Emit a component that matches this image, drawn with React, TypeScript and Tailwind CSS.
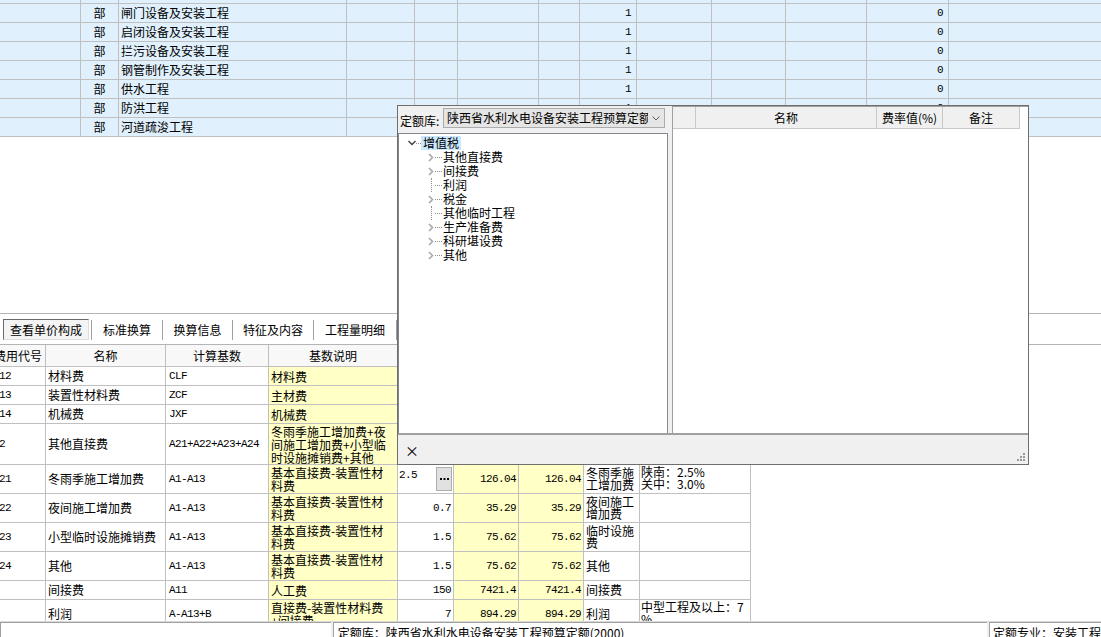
import React from "react";

const mono = "font-['Liberation_Mono',monospace] text-[11px] tracking-[-0.6px]";
const line = "border-[#c0c0c0]";

const topCols = [81, 38, 228, 68, 43, 81, 41, 57, 75, 74, 81, 82];
const topRows = ["闸门设备及安装工程", "启闭设备及安装工程", "拦污设备及安装工程", "钢管制作及安装工程", "供水工程", "防洪工程", "河道疏浚工程"];

type Row = {
  id: string;
  code: string;
  name: string;
  base: string;
  desc: string;
  rate?: string;
  price?: string;
  total?: string;
  type?: string;
  remark?: string;
  h: string;
  edit?: boolean;
};

const rows: Row[] = [
  { id: "a12", code: "A12", name: "材料费", base: "CLF", desc: "材料费", h: "h-[19px]" },
  { id: "a13", code: "A13", name: "装置性材料费", base: "ZCF", desc: "主材费", h: "h-[19px]" },
  { id: "a14", code: "A14", name: "机械费", base: "JXF", desc: "机械费", h: "h-[19px]" },
  { id: "a2", code: "A2", name: "其他直接费", base: "A21+A22+A23+A24", desc: "冬雨季施工增加费+夜间施工增加费+小型临时设施摊销费+其他", h: "h-[41px]" },
  { id: "a21", code: "A21", name: "冬雨季施工增加费", base: "A1-A13", desc: "基本直接费-装置性材料费", rate: "2.5", price: "126.04", total: "126.04", type: "冬雨季施工增加费", remark: "陕南：2.5%\n关中：3.0%", h: "h-[29px]", edit: true },
  { id: "a22", code: "A22", name: "夜间施工增加费", base: "A1-A13", desc: "基本直接费-装置性材料费", rate: "0.7", price: "35.29", total: "35.29", type: "夜间施工增加费", h: "h-[29px]" },
  { id: "a23", code: "A23", name: "小型临时设施摊销费", base: "A1-A13", desc: "基本直接费-装置性材料费", rate: "1.5", price: "75.62", total: "75.62", type: "临时设施费", h: "h-[29px]" },
  { id: "a24", code: "A24", name: "其他", base: "A1-A13", desc: "基本直接费-装置性材料费", rate: "1.5", price: "75.62", total: "75.62", type: "其他", h: "h-[29px]" },
  { id: "b", code: "", name: "间接费", base: "A11", desc: "人工费", rate: "150", price: "7421.4", total: "7421.4", type: "间接费", h: "h-[19px]" },
  { id: "c", code: "", name: "利润", base: "A-A13+B", desc: "直接费-装置性材料费+间接费", rate: "7", price: "894.29", total: "894.29", type: "利润", remark: "中型工程及以上：7\n%", h: "h-[29px]" },
];

const tree = [
  { t: "其他直接费", open: true },
  { t: "间接费", open: true },
  { t: "利润", open: false },
  { t: "税金", open: true },
  { t: "其他临时工程", open: false },
  { t: "生产准备费", open: true },
  { t: "科研堪设费", open: true },
  { t: "其他", open: true },
];

function TopGrid() {
  return (
    <div className={`flex flex-col border-b ${line}`}>
      {[-1, ...topRows.map((_, i) => i)].map((i) => (
        <div key={i} className={`flex bg-[#e0f0fd] ${i < 0 ? "h-[3px]" : `h-[19px] border-t ${line}`}`}>
          {topCols.map((w, c) => (
            <div
              key={c}
              style={{ width: w }}
              className={`shrink-0 border-r ${line} flex items-center ${c === 1 ? "justify-center" : c === 7 || c === 11 ? "justify-end pr-[5px]" : "pl-[2px]"}`}
            >
              {i >= 0 && c === 1 && "部"}
              {i >= 0 && c === 2 && topRows[i]}
              {i >= 0 && c === 7 && <span className={mono}>1</span>}
              {i >= 0 && c === 11 && <span className={mono}>0</span>}
            </div>
          ))}
          <div className="flex-1" />
        </div>
      ))}
    </div>
  );
}

function Tabs() {
  const others = [
    { t: "标准换算", w: "w-[70px]" },
    { t: "换算信息", w: "w-[69px]" },
    { t: "特征及内容", w: "w-[80px]" },
    { t: "工程量明细", w: "w-[82px]" },
  ];
  return (
    <div className="h-[32px] shrink-0 border-t border-b border-[#b4b4b4] bg-white flex items-center pl-[3px] pt-[1px]">
      <div className="w-[86px] h-[21px] border border-t-[#6a6a6a] border-l-[#6a6a6a] border-r-[#dcdcdc] border-b-[#dcdcdc] bg-[#f4f4f4] flex items-center justify-center">
        查看单价构成
      </div>
      <div className="w-[2px]" />
      {others.map((o) => (
        <React.Fragment key={o.t}>
          <div className="w-px h-[20px] bg-[#a0a0a0]" />
          <div className={`${o.w} flex justify-center`}>{o.t}</div>
        </React.Fragment>
      ))}
      <div className="w-px h-[20px] bg-[#a0a0a0]" />
    </div>
  );
}

function Table() {
  const widths = ["w-[55px]", "w-[120px]", "w-[103px]", "w-[129px]", "w-[56px]", "w-[65px]", "w-[65px]", "w-[56px]", "w-[111px]"];
  const heads = ["费用代号", "名称", "计算基数", "基数说明", "费率(%)", "单价", "合价", "费用类别", "备注"];
  return (
    <div className="flex-1 min-h-0 overflow-hidden -ml-[9px]">
      <div className="flex h-[21px] bg-[#f8f8f8] w-fit">
        {heads.map((h, i) => (
          <div key={h} className={`${widths[i]} shrink-0 border-r ${line} flex items-center justify-center`}>
            {h}
          </div>
        ))}
      </div>
      {rows.map((r) => (
        <div key={r.id} className={`flex ${r.h} border-t ${line} w-fit`}>
          <div className={`${widths[0]} shrink-0 border-r ${line} flex items-center pl-[2px] ${mono}`}>{r.code}</div>
          <div className={`${widths[1]} shrink-0 border-r ${line} flex items-center pl-[2px]`}>{r.name}</div>
          <div className={`${widths[2]} shrink-0 border-r ${line} flex items-center pl-[3px] ${mono}`}>{r.base}</div>
          <div className={`${widths[3]} shrink-0 border-r ${line} bg-[#ffffc6] flex items-center pl-[2px] pr-[2px] leading-[13px]`}>
            <span>{r.desc}</span>
          </div>
          {r.edit ? (
            <div className={`${widths[4]} shrink-0 border-r ${line} flex justify-between pl-[1px] pr-px pt-[2px]`}>
              <span className={mono}>{r.rate}</span>
              <div className="w-[16px] h-[24px] bg-[#e1e1e1] border border-[#adadad] flex items-center justify-center">
                <svg width="9" height="3" viewBox="0 0 9 3">
                  <rect x="0" y="0" width="2" height="2" fill="#000" />
                  <rect x="3.5" y="0" width="2" height="2" fill="#000" />
                  <rect x="7" y="0" width="2" height="2" fill="#000" />
                </svg>
              </div>
            </div>
          ) : (
            <div className={`${widths[4]} shrink-0 border-r ${line} flex items-center justify-end pr-[2px] ${mono}`}>{r.rate}</div>
          )}
          <div className={`${widths[5]} shrink-0 border-r ${line} bg-[#ffffc6] flex items-center justify-end pr-[2px] ${mono}`}>{r.price}</div>
          <div className={`${widths[6]} shrink-0 border-r ${line} bg-[#ffffc6] flex items-center justify-end pr-[2px] ${mono}`}>{r.total}</div>
          <div className={`${widths[7]} shrink-0 border-r ${line} flex items-center pl-[2px] pr-[2px] leading-[12px]`}>{r.type}</div>
          <div className={`${widths[8]} shrink-0 border-r ${line} pl-[1px] pt-[1px] leading-[12px] whitespace-pre overflow-hidden`}>
            {r.remark}
          </div>
        </div>
      ))}
    </div>
  );
}

function StatusBar() {
  return (
    <div className="h-[16px] shrink-0 bg-[#f0f0f0] border-t border-[#d8d8d8] flex gap-[2px] leading-[14px]">
      <div className="w-[332px] border-t border-l border-[#a0a0a0] bg-white" />
      <div className="w-[657px] border-t border-l border-[#a0a0a0] bg-white pl-[4px] pt-[3px]">定额库：陕西省水利水电设备安装工程预算定额(2000)</div>
      <div className="flex-1 border-t border-l border-[#a0a0a0] bg-white pl-[3px] pt-[3px] whitespace-nowrap">定额专业：安装工程</div>
    </div>
  );
}

function Chevron({ down }: { down?: boolean }) {
  return down ? (
    <svg width="8" height="6" viewBox="0 0 8 6">
      <path d="M0.5 1 L4 4.5 L7.5 1" fill="none" stroke="#404040" strokeWidth="1.4" />
    </svg>
  ) : (
    <svg width="6" height="9" viewBox="0 0 6 9">
      <path d="M1 1 L4.5 4.5 L1 8" fill="none" stroke="#a6a6a6" strokeWidth="1.5" />
    </svg>
  );
}

function Dialog() {
  return (
    <div className="absolute left-[397px] top-[105px] w-[632px] h-[360px] border border-[#6e6e6e] bg-[#f0f0f0] flex flex-col">
      <div className="flex flex-1 min-h-0 border-b-2 border-[#a0a0a0]">
        {/* left pane */}
        <div className="w-[270px] flex flex-col">
          <div className="h-[27px] flex items-start pt-[2px] pl-[2px]">
            <span className="mt-[6px] leading-[14px] w-[43px]">定额库:</span>
            <div className="w-[222px] h-[20px] bg-[#e5e5e5] border border-[#acacac] flex items-center pl-[3px] pr-[4px] gap-[4px]">
              <span className="flex-1 overflow-hidden whitespace-nowrap leading-[16px]">陕西省水利水电设备安装工程预算定额(2000)</span>
              <svg width="8" height="5" viewBox="0 0 8 5">
                <path d="M0.5 0.5 L4 4 L7.5 0.5" fill="none" stroke="#606060" strokeWidth="1" />
              </svg>
            </div>
          </div>
          <div className="flex-1 border border-b-0 border-[#828790] bg-white pt-[2px] leading-[14px]">
            <div className="h-[14px] flex items-center">
              <div className="w-[9px]" />
              <Chevron down />
              <div className="w-[5px] border-t border-dotted border-[#909090]" />
              <div className="bg-[#cce8ff] px-[2px] h-[14px] flex items-center">增值税</div>
            </div>
            {tree.map((n) => (
              <div key={n.t} className="h-[14px] flex items-center">
                <div className="w-[29px] shrink-0" />
                <div className="w-[7px] h-[14px] flex items-center">
                  {n.open ? <Chevron /> : <div className="ml-[3px] h-[14px] border-l border-dotted border-[#909090]" />}
                </div>
                <div className="w-[7px] border-t border-dotted border-[#909090]" />
                <span className="pl-px">{n.t}</span>
              </div>
            ))}
          </div>
        </div>
        <div className="w-[4px]" />
        {/* right pane */}
        <div className="flex-1 bg-white border-l border-t border-[#a0a0a0]">
          <div className="flex h-[22px] w-fit border-b border-[#c8c8c8] bg-[#f0f0f0]">
            <div className="w-[23px] border-r border-[#c8c8c8]" />
            <div className="w-[181px] border-r border-[#c8c8c8] flex items-center justify-center">名称</div>
            <div className="w-[66px] border-r border-[#c8c8c8] flex items-center justify-center">费率值(%)</div>
            <div className="w-[77px] border-r border-[#c8c8c8] flex items-center justify-center">备注</div>
          </div>
        </div>
      </div>
      <div className="h-[29px] flex items-center pl-[7px] relative">
        <span className="text-[14px] leading-none">×</span>
        <svg className="absolute right-[2px] bottom-[2px]" width="10" height="10" viewBox="0 0 10 10">
          <rect x="7" y="1" width="2" height="2" fill="#9a9a9a" />
          <rect x="4" y="4" width="2" height="2" fill="#9a9a9a" />
          <rect x="7" y="4" width="2" height="2" fill="#9a9a9a" />
          <rect x="1" y="7" width="2" height="2" fill="#9a9a9a" />
          <rect x="4" y="7" width="2" height="2" fill="#9a9a9a" />
          <rect x="7" y="7" width="2" height="2" fill="#9a9a9a" />
        </svg>
      </div>
    </div>
  );
}

export default function App() {
  return (
    <div className="relative w-[1101px] h-[637px] overflow-hidden bg-white text-[#000] text-[12px] leading-[16px] font-['Noto_Sans_CJK_SC',sans-serif] flex flex-col">
      <TopGrid />
      <div className="h-[176px] shrink-0" />
      <Tabs />
      <Table />
      <StatusBar />
      <Dialog />
    </div>
  );
}
